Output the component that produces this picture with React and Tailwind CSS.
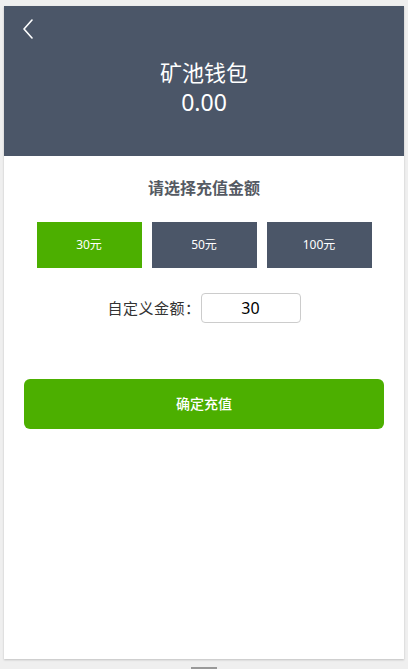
import React, { useState } from 'react';

const amounts = [30, 50, 100];

function App() {
  const [selected, setSelected] = useState(30);
  const [custom, setCustom] = useState('30');

  return (
    <div
      className="w-[408px] h-[669px] bg-[#efefef] pt-[6px] px-[4px] overflow-hidden relative"
      style={{ fontFamily: '"Noto Sans", "Noto Sans CJK SC", sans-serif' }}
    >
      <div className="w-[400px] h-[653px] bg-white shadow-[0_1px_2px_rgba(0,0,0,0.2)] flex flex-col">
        {/* header */}
        <div className="h-[150px] bg-[#4b5668] relative flex flex-col items-center pt-[51px]">
          <button className="absolute left-[16px] top-[11px] w-[16px] h-[24px] flex items-center justify-center">
            <svg width="12" height="20" viewBox="0 0 12 20" fill="none">
              <path d="M10 1L2 10l8 9" stroke="#fff" strokeWidth="1.6" strokeLinecap="round" strokeLinejoin="round" />
            </svg>
          </button>
          <div className="text-white text-[22px] leading-[30px]">矿池钱包</div>
          <div className="text-white text-[23px] leading-[30px]">0.00</div>
        </div>

        {/* amount choice */}
        <div className="pt-[20px] text-center text-[16px] leading-[24px] font-bold text-[#555a63]">
          请选择充值金额
        </div>
        <div className="flex justify-center gap-[10px] mt-[22px]">
          {amounts.map((a) => (
            <button
              key={a}
              onClick={() => { setSelected(a); setCustom(String(a)); }}
              className={`w-[105px] h-[46px] text-white text-[12px] ${selected === a ? 'bg-[#4caf00]' : 'bg-[#4b5668]'}`}
            >
              {a}元
            </button>
          ))}
        </div>

        <div className="flex justify-center items-center mt-[25px]">
          <span className="text-[15px] text-[#333] tracking-[0.5px]" style={{ fontFamily: '"Noto Sans CJK SC", sans-serif' }}>自定义金额：</span>
          <input
            value={custom}
            onChange={(e) => setCustom(e.target.value)}
            className="w-[100px] h-[30px] border border-[#ccc] rounded-[4px] text-center text-[16px] text-black outline-none"
          />
        </div>

        <div className="px-[20px] mt-[56px]">
          <button className="w-full h-[50px] bg-[#4caf00] rounded-[6px] text-white text-[14px] font-medium leading-[20px]">
            确定充值
          </button>
        </div>
      </div>
      <div className="absolute left-[191px] bottom-0 w-[26px] h-[2px] bg-[#999]" />
    </div>
  );
}

export default App;
